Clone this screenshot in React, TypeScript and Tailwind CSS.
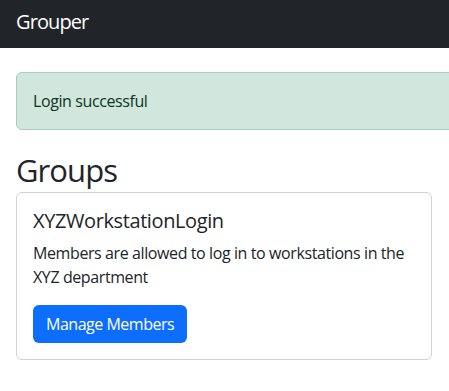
export default function App() {
  return (
    <div
      className="min-h-screen overflow-hidden bg-white text-[#212529] tracking-[-0.025em]"
      style={{ fontFamily: '"Open Sans", "Noto Sans", sans-serif' }}
    >
      {/* Navbar */}
      <nav className="h-12 bg-[#212529] flex items-center px-4 pb-1">
        <span className="text-[20px] leading-[30px] tracking-[-0.045em] text-white">Grouper</span>
      </nav>

      <main className="px-4 pt-6">
        {/* Alert */}
        <div className="w-[600px] rounded-md border border-[#a3cfbb] bg-[#d1e7dd] p-4 text-[16px] leading-6 text-[#0a3622]">
          Login successful
        </div>

        <h1 className="mt-5 mb-[2px] text-[31px] leading-[40px] tracking-[-0.03em] font-normal">Groups</h1>

        {/* Card */}
        <div className="w-[416px] rounded-md border border-[#d3d3d3] p-4">
          <h5 className="text-[20px] leading-6 mb-2">XYZWorkstationLogin</h5>
          <p className="text-[16px] leading-6 mb-4">
            Members are allowed to log in to workstations in the XYZ department
          </p>
          <button className="h-[38px] rounded-md bg-[#0d6efd] px-[13px] text-[16px] leading-6 tracking-[-0.03em] text-white">
            Manage Members
          </button>
        </div>
      </main>
    </div>
  );
}
